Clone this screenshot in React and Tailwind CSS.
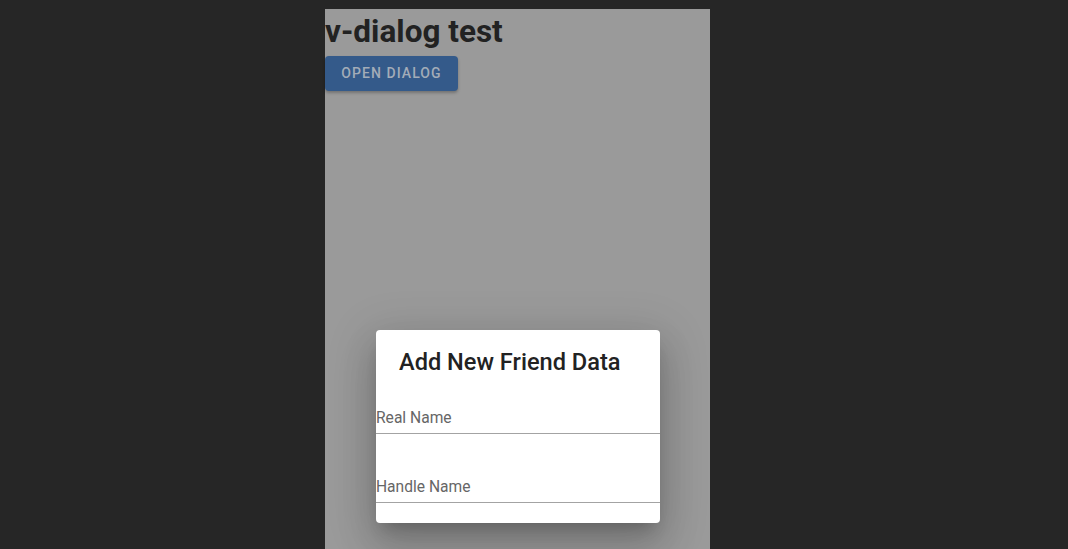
export default function App() {
  return (
    <div className="h-[549px] w-[1068px] overflow-hidden bg-[#262626] pl-[325px] pt-[9px] font-['Roboto',sans-serif]">
      <div className="relative h-[540px] w-[385px] bg-[#9a9a9a]">
        {/* page content (dimmed by overlay) */}
        <h1 className="pt-[3px] text-[31.5px] font-bold leading-[40px] text-[#222222]">
          v-dialog test
        </h1>
        <button className="mt-[4px] h-[35px] w-[133px] rounded-[4px] bg-[#345a8a] text-[14px] font-medium uppercase tracking-[1.05px] text-[#a3acb8] shadow-[0_2px_3px_rgba(0,0,0,0.25)]">
          Open Dialog
        </button>

        {/* dialog */}
        <div className="absolute left-[51px] top-[321px] w-[284px] rounded-[4px] bg-white pb-[20px] shadow-[0_11px_15px_-7px_rgba(0,0,0,0.2),0_24px_38px_3px_rgba(0,0,0,0.14),0_9px_46px_8px_rgba(0,0,0,0.12)]">
          <div className="px-[23px] pt-[16px] pb-[10px] text-[23.6px] font-medium leading-[32px] text-[#222222]">
            Add New Friend Data
          </div>
          <div className="pt-[20px]">
            <div className="border-b border-[#a3a3a3] pb-[5px] text-[15.6px] leading-[20px] text-[#666666]">
              Real Name
            </div>
          </div>
          <div className="pt-[43px]">
            <div className="border-b border-[#a3a3a3] pb-[5px] text-[15.6px] leading-[20px] text-[#666666]">
              Handle Name
            </div>
          </div>
        </div>
      </div>
    </div>
  );
}
